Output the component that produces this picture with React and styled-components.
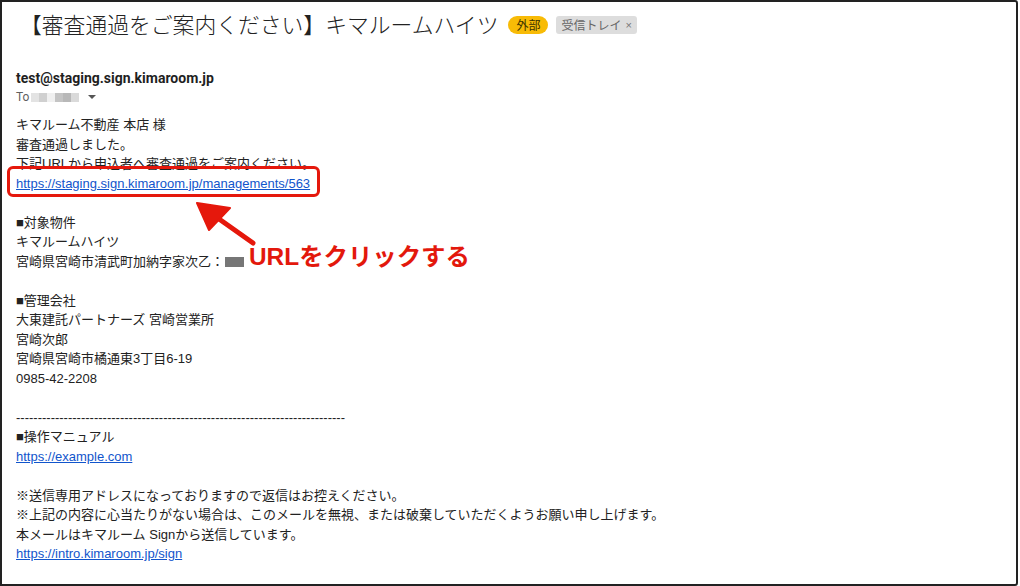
import React from "react";
import styled, { createGlobalStyle } from "styled-components";

const GlobalStyle = createGlobalStyle`
  html, body {
    margin: 0;
    padding: 0;
    background: #ffffff;
  }
  body {
    font-family: "Liberation Sans", Arial, "Noto Sans CJK JP", sans-serif;
    color: #222222;
  }
`;

const mail = {
  subject: "【審査通過をご案内ください】キマルームハイツ",
  from: "test@staging.sign.kimaroom.jp",
  actionUrl: "https://staging.sign.kimaroom.jp/managements/563",
};

const Frame = styled.div`
  position: relative;
  box-sizing: border-box;
  width: 1018px;
  height: 586px;
  border: 2px solid #222222;
  border-radius: 0 3px 3px 0;
  overflow: hidden;
  background: #ffffff;
`;

const SubjectRow = styled.div`
  display: flex;
  align-items: center;
  gap: 8px;
  padding: 8px 0 0 18px;
  height: 28px;
`;

const Subject = styled.h1`
  margin: 0 2px 0 0;
  font-family: "Noto Sans CJK JP", sans-serif;
  font-size: 21.8px;
  font-weight: 300;
  line-height: 28px;
  color: #222222;
  white-space: nowrap;
`;

const Label = styled.span`
  display: inline-flex;
  align-items: center;
  gap: 4px;
  height: 18px;
  padding: 0 ${(p) => (p.$tone === "warn" ? "8px" : "5px")};
  border-radius: ${(p) => (p.$tone === "warn" ? "9px" : "3px")};
  background: ${(p) => (p.$tone === "warn" ? "#f8bb06" : "#dddddd")};
  color: ${(p) => (p.$tone === "warn" ? "#3a3000" : "#666666")};
  font-family: "Noto Sans CJK JP", sans-serif;
  font-size: 12px;
  line-height: 18px;
  margin-top: 2px;
`;

const Close = styled.span`
  font-family: "Liberation Sans", sans-serif;
  font-size: 11px;
  color: #777777;
`;

const Sender = styled.div`
  padding: 30px 0 0 14px;
`;

const FromLine = styled.div`
  font-family: "Roboto", "Liberation Sans", sans-serif;
  font-size: 14px;
  font-weight: 700;
  line-height: 20px;
  color: #1f1f1f;
`;

const ToLine = styled.div`
  display: flex;
  align-items: center;
  height: 16px;
  margin-top: 1px;
  font-family: "Roboto", "Liberation Sans", sans-serif;
  font-size: 12px;
  color: #5f5f5f;
`;

const Masked = styled.span`
  display: inline-flex;
  margin-left: 2px;
`;

const Pixel = styled.span`
  width: 8px;
  height: 9px;
  background: ${(p) => p.$shade};
`;

const Caret = styled.span`
  margin-left: 9px;
  width: 0;
  height: 0;
  border-left: 4px solid transparent;
  border-right: 4px solid transparent;
  border-top: 4px solid #555555;
`;

const Body = styled.div`
  padding: 10px 0 0 14px;
  font-size: 13px;
  line-height: 19.5px;
  color: #222222;
`;

const Line = styled.div`
  position: relative;
  height: 19.5px;
  white-space: nowrap;
`;

const Link = styled.a`
  color: #1155cc;
  text-decoration: underline;
`;

const Highlight = styled.span`
  position: absolute;
  left: -9px;
  top: -8px;
  width: 313px;
  height: 31px;
  box-sizing: border-box;
  border: 3px solid #e5180c;
  border-radius: 6px;
  pointer-events: none;
`;

const Redacted = styled.span`
  display: inline-block;
  width: 19px;
  height: 10px;
  margin-left: 1px;
  background: #767676;
  vertical-align: -1px;
`;

const Arrow = styled.svg`
  position: absolute;
  left: 190px;
  top: 194px;
`;

const Caption = styled.div`
  position: absolute;
  left: 247px;
  top: 239px;
  font-family: "Liberation Sans", "Noto Sans CJK JP", sans-serif;
  font-size: 24.4px;
  font-weight: 700;
  line-height: 32px;
  color: #e3180c;
  white-space: nowrap;
`;

const toShades = ["#e3e3e3", "#d0d0d0", "#f0f0f0", "#c4c4c4", "#b8b8b8", "#dadada"];

const lines = [
  "キマルーム不動産 本店 様",
  "審査通過しました。",
  "下記URLから申込者へ審査通過をご案内ください。",
  { link: mail.actionUrl, highlight: true },
  "",
  "■対象物件",
  "キマルームハイツ",
  { text: "宮崎県宮崎市清武町加納字家次乙：", redacted: true },
  "",
  "■管理会社",
  "大東建託パートナーズ 宮崎営業所",
  "宮崎次郎",
  "宮崎県宮崎市橘通東3丁目6-19",
  "0985-42-2208",
  "",
  "-".repeat(76),
  "■操作マニュアル",
  { link: "https://example.com" },
  "",
  "※送信専用アドレスになっておりますので返信はお控えください。",
  "※上記の内容に心当たりがない場合は、このメールを無視、または破棄していただくようお願い申し上げます。",
  "本メールはキマルーム Signから送信しています。",
  { link: "https://intro.kimaroom.jp/sign" },
];

function BodyLine({ item }) {
  if (typeof item === "string") return <Line>{item}</Line>;
  if (item.link)
    return (
      <Line>
        <Link href={item.link}>{item.link}</Link>
        {item.highlight && <Highlight />}
      </Line>
    );
  return (
    <Line>
      {item.text}
      {item.redacted && <Redacted />}
    </Line>
  );
}

export default function App() {
  return (
    <>
      <GlobalStyle />
      <Frame>
        <SubjectRow>
          <Subject>{mail.subject}</Subject>
          <Label $tone="warn">外部</Label>
          <Label>
            受信トレイ <Close>×</Close>
          </Label>
        </SubjectRow>

        <Sender>
          <FromLine>{mail.from}</FromLine>
          <ToLine>
            To
            <Masked>
              {toShades.map((s, i) => (
                <Pixel key={i} $shade={s} />
              ))}
            </Masked>
            <Caret />
          </ToLine>
        </Sender>

        <Body>
          {lines.map((item, i) => (
            <BodyLine key={i} item={item} />
          ))}
        </Body>

        <Arrow width="70" height="52" viewBox="0 0 70 52">
          <line x1="61" y1="47" x2="20" y2="18" stroke="#e5180c" strokeWidth="5" strokeLinecap="round" />
          <polygon points="5,7 38,12 17,34" fill="#e5180c" stroke="#e5180c" strokeWidth="2" strokeLinejoin="round" />
        </Arrow>
        <Caption>URLをクリックする</Caption>
      </Frame>
    </>
  );
}
